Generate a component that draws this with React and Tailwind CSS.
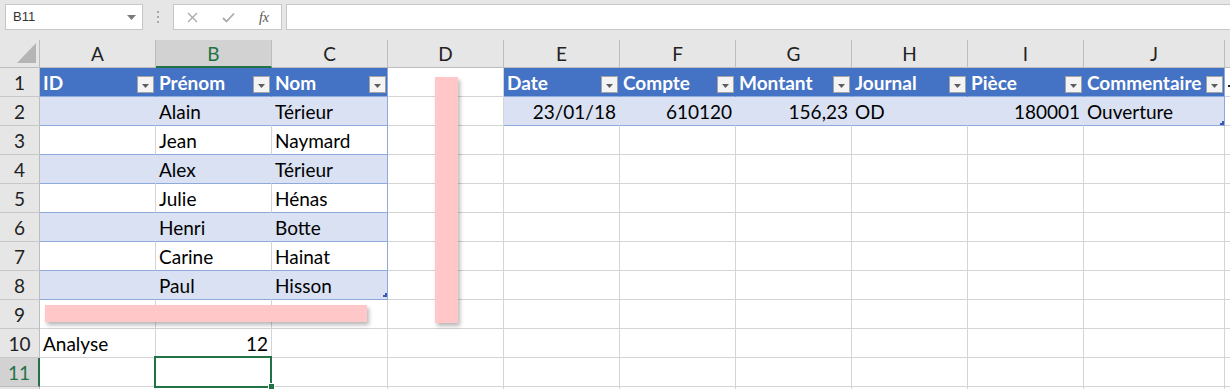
import React from "react";

const COLS = ["A", "B", "C", "D", "E", "F", "G", "H", "I", "J", "K"];

const BG = {
  head: "bg-[#4472c4] text-white font-bold",
  band: "bg-[#d9e1f2]",
  white: "bg-white",
};
const BR = {
  head: "border-r-[#4472c4]",
  band: "border-r-[#d9e1f2]",
  edge: "border-r-[#8ea9db]",
  grid: "border-r-[#d4d4d4]",
};
const BB = {
  edge: "border-b-[#8ea9db]",
  grid: "border-b-[#d4d4d4]",
};

const people = [
  ["Alain", "Térieur"],
  ["Jean", "Naymard"],
  ["Alex", "Térieur"],
  ["Julie", "Hénas"],
  ["Henri", "Botte"],
  ["Carine", "Hainat"],
  ["Paul", "Hisson"],
];

const journal = {
  head: ["Date", "Compte", "Montant", "Journal", "Pièce", "Commentaire"],
  row: [
    ["23/01/18", true],
    ["610120", true],
    ["156,23", true],
    ["OD", false],
    ["180001", true],
    ["Ouverture", false],
  ],
};

// works out what a cell holds and how it looks
function cellFor(r, c) {
  let cell = { text: "", right: false, bg: "white", br: "grid", bb: "grid", filter: false };

  // left table A1:C8
  if (c <= 2 && r <= 8) {
    const last = c === 2;
    if (r === 1) {
      cell = { ...cell, text: ["ID", "Prénom", "Nom"][c], bg: "head", br: last ? "edge" : "head", bb: "edge", filter: true };
    } else {
      const band = r % 2 === 0;
      cell = {
        ...cell,
        text: c === 0 ? "" : people[r - 2][c - 1],
        bg: band ? "band" : "white",
        br: last ? "edge" : band ? "band" : "grid",
        bb: "edge",
      };
    }
  }

  // right table E1:J2
  if (c >= 4 && c <= 9 && r <= 2) {
    const i = c - 4;
    const last = c === 9;
    if (r === 1) {
      cell = { ...cell, text: journal.head[i], bg: "head", br: last ? "edge" : "head", bb: "edge", filter: true };
    } else {
      cell = { ...cell, text: journal.row[i][0], right: journal.row[i][1], bg: "band", br: last ? "edge" : "band", bb: "edge" };
    }
  }

  if (r === 10 && c === 0) cell.text = "Analyse";
  if (r === 10 && c === 1) {
    cell.text = "12";
    cell.right = true;
  }
  return cell;
}

function FilterButton() {
  return (
    <div className="absolute right-[1px] bottom-[3px] w-[17px] h-[17px] bg-[#f4f4f4] border border-[#a3a3a3] flex items-center justify-center">
      <svg width="7" height="4" viewBox="0 0 7 4" className="mt-[2px]">
        <path d="M0 0H7L3.5 4Z" fill="#5e5e5e" />
      </svg>
    </div>
  );
}

function FormulaBar() {
  return (
    <div className="h-[40px] bg-[#e6e6e6] flex items-start pt-[4px] pl-[5px]">
      <div className="w-[138px] h-[26px] bg-white border border-[#c6c6c6] flex items-center justify-between pl-[7px] pr-[6px] text-[13px] text-[#333] font-['Liberation_Sans',sans-serif]">
        <span>B11</span>
        <svg width="9" height="5" viewBox="0 0 9 5">
          <path d="M0 0H9L4.5 5Z" fill="#7a7a7a" />
        </svg>
      </div>
      <div className="w-[30px] h-[26px] flex flex-col items-center justify-center gap-[3px]">
        <div className="w-[2px] h-[2px] bg-[#a8a8a8]" />
        <div className="w-[2px] h-[2px] bg-[#a8a8a8]" />
        <div className="w-[2px] h-[2px] bg-[#a8a8a8]" />
      </div>
      <div className="w-[109px] h-[26px] bg-white border border-[#c6c6c6] flex items-center">
        <div className="w-[36px] flex justify-center">
          <svg width="11" height="11" viewBox="0 0 11 11">
            <path d="M1 1L10 10M10 1L1 10" stroke="#ababab" strokeWidth="1.4" />
          </svg>
        </div>
        <div className="w-[37px] flex justify-center">
          <svg width="13" height="11" viewBox="0 0 13 11">
            <path d="M1 6L4.5 9.5L12 1.5" stroke="#ababab" strokeWidth="1.8" fill="none" />
          </svg>
        </div>
        <div className="w-[34px] flex justify-center text-[14px] italic text-[#555] font-['Liberation_Serif',serif]">
          fx
        </div>
      </div>
      <div className="ml-[4px] flex-1 h-[26px] bg-white border border-[#c6c6c6] border-r-0" />
    </div>
  );
}

function Sheet() {
  const rows = [1, 2, 3, 4, 5, 6, 7, 8, 9, 10, 11, 12];
  return (
    <div className="relative">
      <div className="grid grid-cols-[40px_repeat(9,116px)_141px_1fr] text-[19px]">
        {/* corner */}
        <div className="relative h-[28px] bg-[#e6e6e6] border-r border-b border-[#bdbdbd]">
          <svg width="40" height="28" viewBox="0 0 40 28" className="absolute left-0 top-0">
            <path d="M17 23L36 3V23Z" fill="#b5b5b5" />
          </svg>
        </div>
        {COLS.map((col) =>
          col === "B" ? (
            <div key={col} className="h-[28px] bg-[#d2d2d2] border-r border-r-[#bdbdbd] border-b-2 border-b-[#217346] text-[#217346] flex justify-center leading-[28px]">
              {col}
            </div>
          ) : (
            <div key={col} className="h-[28px] bg-[#e6e6e6] border-r border-b border-[#bdbdbd] text-[#222] flex justify-center leading-[28px]">
              {col === "K" ? "" : col}
            </div>
          )
        )}

        {rows.map((r) => (
          <React.Fragment key={r}>
            {r === 11 ? (
              <div className="h-[29px] bg-[#d2d2d2] border-r-2 border-r-[#217346] border-b border-b-[#bdbdbd] text-[#217346] flex justify-center leading-[29px]">
                {r}
              </div>
            ) : (
              <div className="h-[29px] bg-[#e6e6e6] border-r border-b border-r-[#bdbdbd] border-b-[#c8c8c8] text-[#222] flex justify-center leading-[29px]">
                {r === 12 ? "" : r}
              </div>
            )}
            {COLS.map((col, c) => {
              const cell = cellFor(r, c);
              return (
                <div
                  key={col}
                  className={`relative h-[29px] border-r border-b px-[3px] leading-[29px] flex whitespace-nowrap overflow-visible ${BG[cell.bg]} ${BR[cell.br]} ${BB[cell.bb]} ${cell.right ? "justify-end" : "justify-start"}`}
                >
                  <span className="relative z-[1]">{cell.text}</span>
                  {cell.filter && <FilterButton />}
                  {r === 1 && col === "K" && <div className="absolute left-[3px] top-[17px] w-[3px] h-[2px] bg-[#222]" />}
                </div>
              );
            })}
          </React.Fragment>
        ))}
      </div>

      {/* floating shapes */}
      <div className="absolute left-[45px] top-[265px] w-[322px] h-[17px] bg-[#ffc7c7] shadow-[2px_3px_4px_rgba(0,0,0,0.28)]" />
      <div className="absolute left-[435px] top-[37px] w-[23px] h-[246px] bg-[#ffc7c7] shadow-[2px_3px_4px_rgba(0,0,0,0.28)]" />

      {/* table resize handles */}
      <svg width="4" height="4" viewBox="0 0 4 4" className="absolute left-[383px] top-[253px]">
        <path d="M4 0V4H0V2H2V0Z" fill="#3b56b5" />
      </svg>
      <svg width="4" height="4" viewBox="0 0 4 4" className="absolute left-[1220px] top-[81px]">
        <path d="M4 0V4H0V2H2V0Z" fill="#3b56b5" />
      </svg>

      {/* active cell B11 */}
      <div className="absolute left-[154px] top-[316px] w-[118px] h-[32px] border-2 border-[#217346]" />
      <div className="absolute left-[268px] top-[343px] w-[7px] h-[7px] bg-[#217346] border border-white" />
    </div>
  );
}

export default function App() {
  return (
    <div className="w-[1230px] h-[389px] overflow-hidden bg-white text-black font-['Lato',sans-serif]">
      <FormulaBar />
      <Sheet />
    </div>
  );
}
